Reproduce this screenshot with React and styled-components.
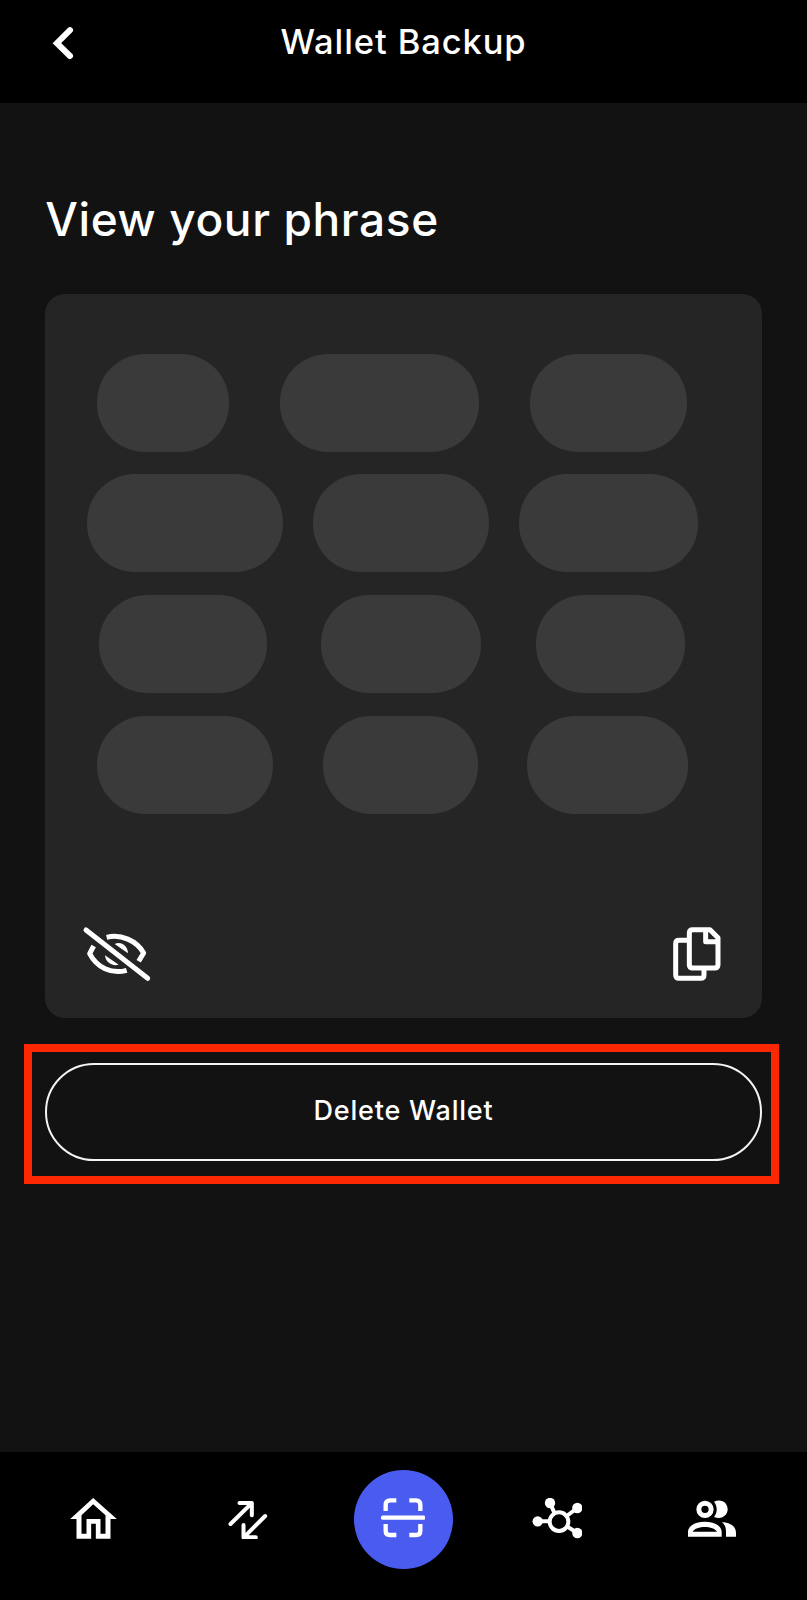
import React from "react";
import styled, { createGlobalStyle } from "styled-components";

const GlobalStyle = createGlobalStyle`
  *, *::before, *::after { box-sizing: border-box; }
  body {
    margin: 0;
    background: #121212;
    color: #fff;
    font-family: Inter, "Liberation Sans", sans-serif;
    font-weight: 500;
  }
  button {
    margin: 0;
    padding: 0;
    border: 0;
    background: none;
    color: inherit;
    font: inherit;
  }
  svg { display: block; }
`;

const Screen = styled.div`
  display: flex;
  flex-direction: column;
  width: 807px;
  height: 1600px;
  background: #121212;
`;

const Header = styled.header`
  display: grid;
  grid-template-columns: 120px 1fr 120px;
  height: 102.7px;
  background: #000;
`;

const BackButton = styled.button`
  justify-self: start;
  align-self: start;
  padding: 26px 0 0 52px;
`;

const Title = styled.h1`
  margin: 0;
  text-align: center;
  font-size: 34.5px;
  font-weight: 500;
  line-height: 83px;
  letter-spacing: 0.9px;
`;

const Main = styled.main`
  flex: 1;
  padding: 86px 45.3px 0;
`;

const Heading = styled.h2`
  margin: 0 0 45px;
  font-size: 46px;
  font-weight: 500;
  line-height: 60px;
  letter-spacing: 0.62px;
`;

const PhraseCard = styled.section`
  display: flex;
  flex-direction: column;
  justify-content: space-between;
  height: 724px;
  padding: 60px 40px 35px 26.7px;
  border-radius: 20px;
  background: #252525;
`;

const WordRows = styled.div`
  display: flex;
  flex-direction: column;
  gap: 22.8px;
  padding-right: 9.3px;
`;

const WordRow = styled.div`
  display: flex;
  justify-content: space-around;
`;

const WordPill = styled.div`
  width: ${(p) => p.$width}px;
  height: 98px;
  border-radius: 48px;
  background: #3a3a3a;
`;

const CardActions = styled.div`
  display: flex;
  align-items: center;
  justify-content: space-between;
  padding-left: 10px;
`;

const DeleteArea = styled.div`
  position: relative;
  margin-top: 45px;
`;

const DeleteButton = styled.button`
  width: 100%;
  height: 98.6px;
  padding-bottom: 3.4px;
  border: 2px solid #f4f4f4;
  border-radius: 50px;
  font-size: 27px;
  letter-spacing: 0.8px;
`;

const Highlight = styled.div`
  position: absolute;
  inset: -18.7px -17.7px -22.4px -21.3px;
  border: 8px solid #fc2803;
  pointer-events: none;
`;

const Nav = styled.nav`
  display: flex;
  height: 148.3px;
  padding: 18px 18px 0 16px;
  background: #000;
`;

const NavItem = styled.button`
  display: flex;
  flex: 1;
  align-items: center;
  justify-content: center;
  height: 99px;

  > svg { margin-bottom: 1px; }
`;

const ScanDisc = styled.span`
  display: flex;
  align-items: center;
  justify-content: center;
  width: 98.6px;
  height: 98.6px;
  margin-left: 2px;
  border-radius: 50%;
  background: #4a5cf0;
`;

const line = { fill: "none", stroke: "#fff", strokeWidth: 13 };
const round = { strokeLinecap: "round", strokeLinejoin: "round" };

const BackIcon = () => (
  <svg width="22" height="34" viewBox="0 0 22 34" {...line} strokeWidth="6" strokeLinecap="round">
    <path d="M18 4.2 4.9 17.2 18 30" />
  </svg>
);

const EyeOffIcon = () => (
  <svg width="70" height="56" viewBox="36 48 210 168" {...line} strokeWidth="15">
    <path d="M48 60 233 205" strokeLinecap="round" />
    <path d="M110 82C152 71 200 92 221 129L206 154" strokeLinejoin="round" />
    <path d="M71 108 59 131C80 172 124 194 170 181" strokeLinejoin="round" />
    <path d="M134 102C153 92 174 108 174 130ZM105 136C106 157 127 170 146 164Z" fill="#fff" stroke="none" />
  </svg>
);

const CopyIcon = () => (
  <svg width="50" height="57.3" viewBox="36 45 150 172" {...line} strokeWidth="15" strokeLinejoin="round">
    <path d="M98 59H150L174 83V164Q174 174 164 174H98Q88 174 88 164V69Q88 59 98 59Z" />
    <path d="M137 59V95H174" />
    <path d="M88 91H57Q47 91 47 101V194Q47 205 57 205H122Q132 205 132 195V175" />
  </svg>
);

const HomeIcon = () => (
  <svg width="47" height="41" viewBox="30.5 174 141 123">
    <path
      fill="#fff"
      fillRule="evenodd"
      d="M100 174 171 237H152V296H108V251H94V296H50V237H31ZM100 193 137 226V281H122V237H80V281H65V226Z"
    />
  </svg>
);

const SwapIcon = () => (
  <svg width="40" height="40" viewBox="23.5 24 120 120" {...line} {...round}>
    <path d="M31 99 94 37M58 36H95V73M135 75 71 139M70 102V139H107" strokeWidth="12" />
  </svg>
);

const ScanIcon = () => (
  <svg width="44" height="44" viewBox="125 171 132 132" {...line}>
    <path d="M171 181H152Q139 181 139 194V213M210 181H230Q243 181 243 194V213M139 252V272Q139 285 152 285H171M243 252V272Q243 285 230 285H210" />
    <path d="M131 233H252" strokeLinecap="round" />
  </svg>
);

const NetworkIcon = () => (
  <svg width="50" height="41" viewBox="66 173 150 123" {...line} strokeWidth="12">
    <circle cx="147" cy="244" r="28" />
    <path d="M120 188 134 219M202 203 170 227M83 243H119M202 278 171 258" />
    <g fill="#fff" stroke="none">
      <circle cx="120" cy="188" r="15.5" />
      <circle cx="202" cy="203" r="15.5" />
      <circle cx="83" cy="243" r="15.5" />
      <circle cx="202" cy="278" r="15.5" />
    </g>
  </svg>
);

const PeopleIcon = () => (
  <svg width="48" height="42" viewBox="534 172 144 126" fill="#fff">
    <circle cx="585" cy="206" r="18.5" fill="none" stroke="#fff" strokeWidth="15" />
    <path d="M612 183C636 173 653 188 653 206S636 238 612 229C623 215 623 197 612 183Z" />
    <path
      fillRule="evenodd"
      d="M534 288V272C538 234 631 234 635 272V288ZM548 273C558 254 611 254 621 273Z"
    />
    <path d="M636 244C662 246 678 258 678 276V288H648V272C648 260 644 252 636 244Z" />
  </svg>
);

const rows = [
  [132.3, 199.5, 157.5],
  [196.3, 176.2, 178.7],
  [167.3, 160.5, 149.3],
  [176.5, 155.3, 160.2],
];

export default function App() {
  return (
    <>
      <GlobalStyle />
      <Screen>
        <Header>
          <BackButton aria-label="Back"><BackIcon /></BackButton>
          <Title>Wallet Backup</Title>
        </Header>
        <Main>
          <Heading>View your phrase</Heading>
          <PhraseCard>
            <WordRows>
              {rows.map((row, i) => (
                <WordRow key={i}>
                  {row.map((width, j) => <WordPill key={j} $width={width} />)}
                </WordRow>
              ))}
            </WordRows>
            <CardActions>
              <button aria-label="Show phrase"><EyeOffIcon /></button>
              <button aria-label="Copy phrase"><CopyIcon /></button>
            </CardActions>
          </PhraseCard>
          <DeleteArea>
            <DeleteButton>Delete Wallet</DeleteButton>
            <Highlight />
          </DeleteArea>
        </Main>
        <Nav>
          <NavItem aria-label="Home"><HomeIcon /></NavItem>
          <NavItem aria-label="Transfer"><SwapIcon /></NavItem>
          <NavItem aria-label="Scan"><ScanDisc><ScanIcon /></ScanDisc></NavItem>
          <NavItem aria-label="Network"><NetworkIcon /></NavItem>
          <NavItem aria-label="Contacts"><PeopleIcon /></NavItem>
        </Nav>
      </Screen>
    </>
  );
}
